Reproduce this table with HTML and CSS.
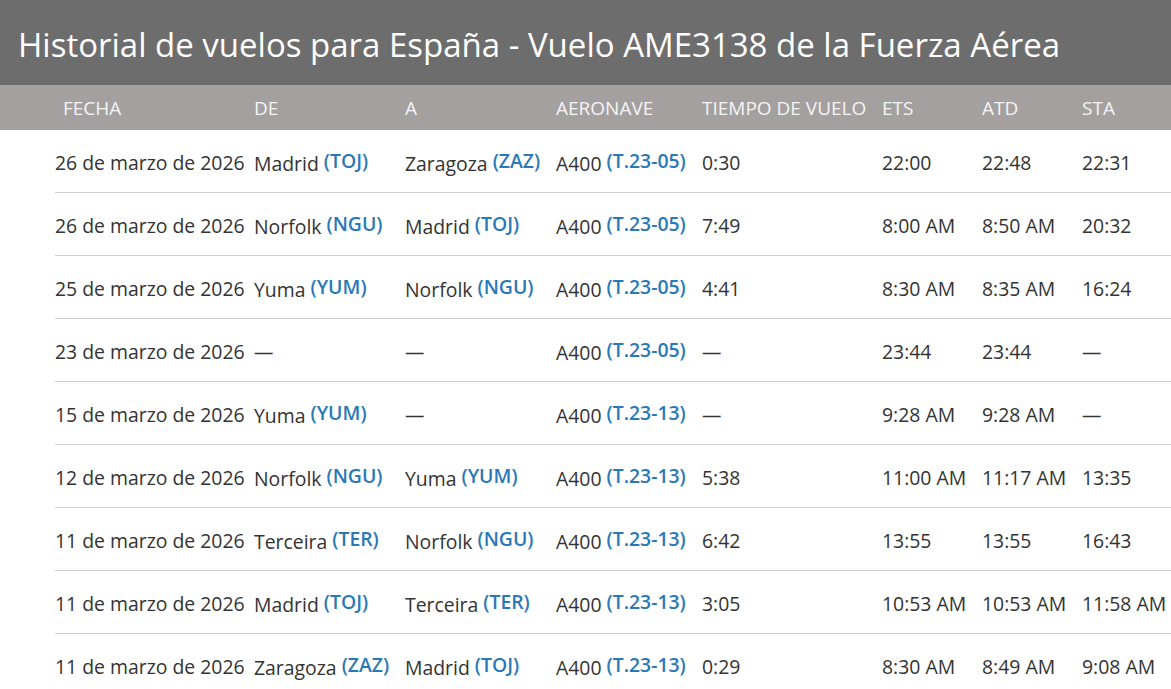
FILE: index.html
```html
<!DOCTYPE html>
<html lang="es">
<head>
<meta charset="utf-8">
<title>Historial de vuelos</title>
<link rel="stylesheet" href="styles.css">
</head>
<body>
<h1 class="title">Historial de vuelos para España - Vuelo AME3138 de la Fuerza Aérea</h1>
<div class="thead">
  <div class="row head">
    <div class="cell first">FECHA</div>
    <div class="cell">DE</div>
    <div class="cell">A</div>
    <div class="cell">AERONAVE</div>
    <div class="cell">TIEMPO DE VUELO</div>
    <div class="cell">ETS</div>
    <div class="cell">ATD</div>
    <div class="cell">STA</div>
  </div>
</div>
<div class="tbody">
  <div class="row">
    <div class="cell">26 de marzo de 2026</div>
    <div class="cell">Madrid <span class="code">(TOJ)</span></div>
    <div class="cell">Zaragoza <span class="code">(ZAZ)</span></div>
    <div class="cell">A400 <span class="code">(T.23-05)</span></div>
    <div class="cell">0:30</div>
    <div class="cell">22:00</div>
    <div class="cell">22:48</div>
    <div class="cell">22:31</div>
  </div>
  <div class="row">
    <div class="cell">26 de marzo de 2026</div>
    <div class="cell">Norfolk <span class="code">(NGU)</span></div>
    <div class="cell">Madrid <span class="code">(TOJ)</span></div>
    <div class="cell">A400 <span class="code">(T.23-05)</span></div>
    <div class="cell">7:49</div>
    <div class="cell">8:00 AM</div>
    <div class="cell">8:50 AM</div>
    <div class="cell">20:32</div>
  </div>
  <div class="row">
    <div class="cell">25 de marzo de 2026</div>
    <div class="cell">Yuma <span class="code">(YUM)</span></div>
    <div class="cell">Norfolk <span class="code">(NGU)</span></div>
    <div class="cell">A400 <span class="code">(T.23-05)</span></div>
    <div class="cell">4:41</div>
    <div class="cell">8:30 AM</div>
    <div class="cell">8:35 AM</div>
    <div class="cell">16:24</div>
  </div>
  <div class="row">
    <div class="cell">23 de marzo de 2026</div>
    <div class="cell">—</div>
    <div class="cell">—</div>
    <div class="cell">A400 <span class="code">(T.23-05)</span></div>
    <div class="cell">—</div>
    <div class="cell">23:44</div>
    <div class="cell">23:44</div>
    <div class="cell">—</div>
  </div>
  <div class="row">
    <div class="cell">15 de marzo de 2026</div>
    <div class="cell">Yuma <span class="code">(YUM)</span></div>
    <div class="cell">—</div>
    <div class="cell">A400 <span class="code">(T.23-13)</span></div>
    <div class="cell">—</div>
    <div class="cell">9:28 AM</div>
    <div class="cell">9:28 AM</div>
    <div class="cell">—</div>
  </div>
  <div class="row">
    <div class="cell">12 de marzo de 2026</div>
    <div class="cell">Norfolk <span class="code">(NGU)</span></div>
    <div class="cell">Yuma <span class="code">(YUM)</span></div>
    <div class="cell">A400 <span class="code">(T.23-13)</span></div>
    <div class="cell">5:38</div>
    <div class="cell">11:00 AM</div>
    <div class="cell">11:17 AM</div>
    <div class="cell">13:35</div>
  </div>
  <div class="row">
    <div class="cell">11 de marzo de 2026</div>
    <div class="cell">Terceira <span class="code">(TER)</span></div>
    <div class="cell">Norfolk <span class="code">(NGU)</span></div>
    <div class="cell">A400 <span class="code">(T.23-13)</span></div>
    <div class="cell">6:42</div>
    <div class="cell">13:55</div>
    <div class="cell">13:55</div>
    <div class="cell">16:43</div>
  </div>
  <div class="row">
    <div class="cell">11 de marzo de 2026</div>
    <div class="cell">Madrid <span class="code">(TOJ)</span></div>
    <div class="cell">Terceira <span class="code">(TER)</span></div>
    <div class="cell">A400 <span class="code">(T.23-13)</span></div>
    <div class="cell">3:05</div>
    <div class="cell">10:53 AM</div>
    <div class="cell">10:53 AM</div>
    <div class="cell">11:58 AM</div>
  </div>
  <div class="row">
    <div class="cell">11 de marzo de 2026</div>
    <div class="cell">Zaragoza <span class="code">(ZAZ)</span></div>
    <div class="cell">Madrid <span class="code">(TOJ)</span></div>
    <div class="cell">A400 <span class="code">(T.23-13)</span></div>
    <div class="cell">0:29</div>
    <div class="cell">8:30 AM</div>
    <div class="cell">8:49 AM</div>
    <div class="cell">9:08 AM</div>
  </div>
</div>
</body>
</html>
```

FILE: styles.css
```css
html, body {
  margin: 0;
  padding: 0;
  overflow: hidden;
  background: #fff;
}
body {
  font-family: "Open Sans", "Liberation Sans", sans-serif;
  color: #333;
}
.title {
  margin: 0;
  height: 85px;
  box-sizing: border-box;
  padding: 4px 0 0 18px;
  display: flex;
  align-items: center;
  background: #6d6d6d;
  color: #fff;
  font-size: 33px;
  font-weight: 400;
  white-space: nowrap;
}
.thead {
  background: #a4a0a0;
  height: 45px;
  display: flex;
  align-items: center;
  padding-left: 55px;
}
.row {
  display: grid;
  grid-template-columns: 199px 151px 151px 146px 180px 100px 100px 100px;
  width: 1127px;
}
.head .cell {
  color: #f4f4f4;
  font-size: 19px;
  letter-spacing: 0;
  white-space: nowrap;
}
.head .cell.first {
  padding-left: 8px;
}
.tbody {
  margin-left: 55px;
}
.tbody .row {
  height: 62px;
  border-bottom: 1px solid #cfcfcf;
  align-items: center;
  font-size: 19.4px;
  width: 1200px;
}
.tbody .cell {
  white-space: nowrap;
  padding-top: 2px;
}
.code {
  color: #2a79b6;
  font-weight: 600;
  font-size: 19.4px;
  vertical-align: 3px;
}
```
